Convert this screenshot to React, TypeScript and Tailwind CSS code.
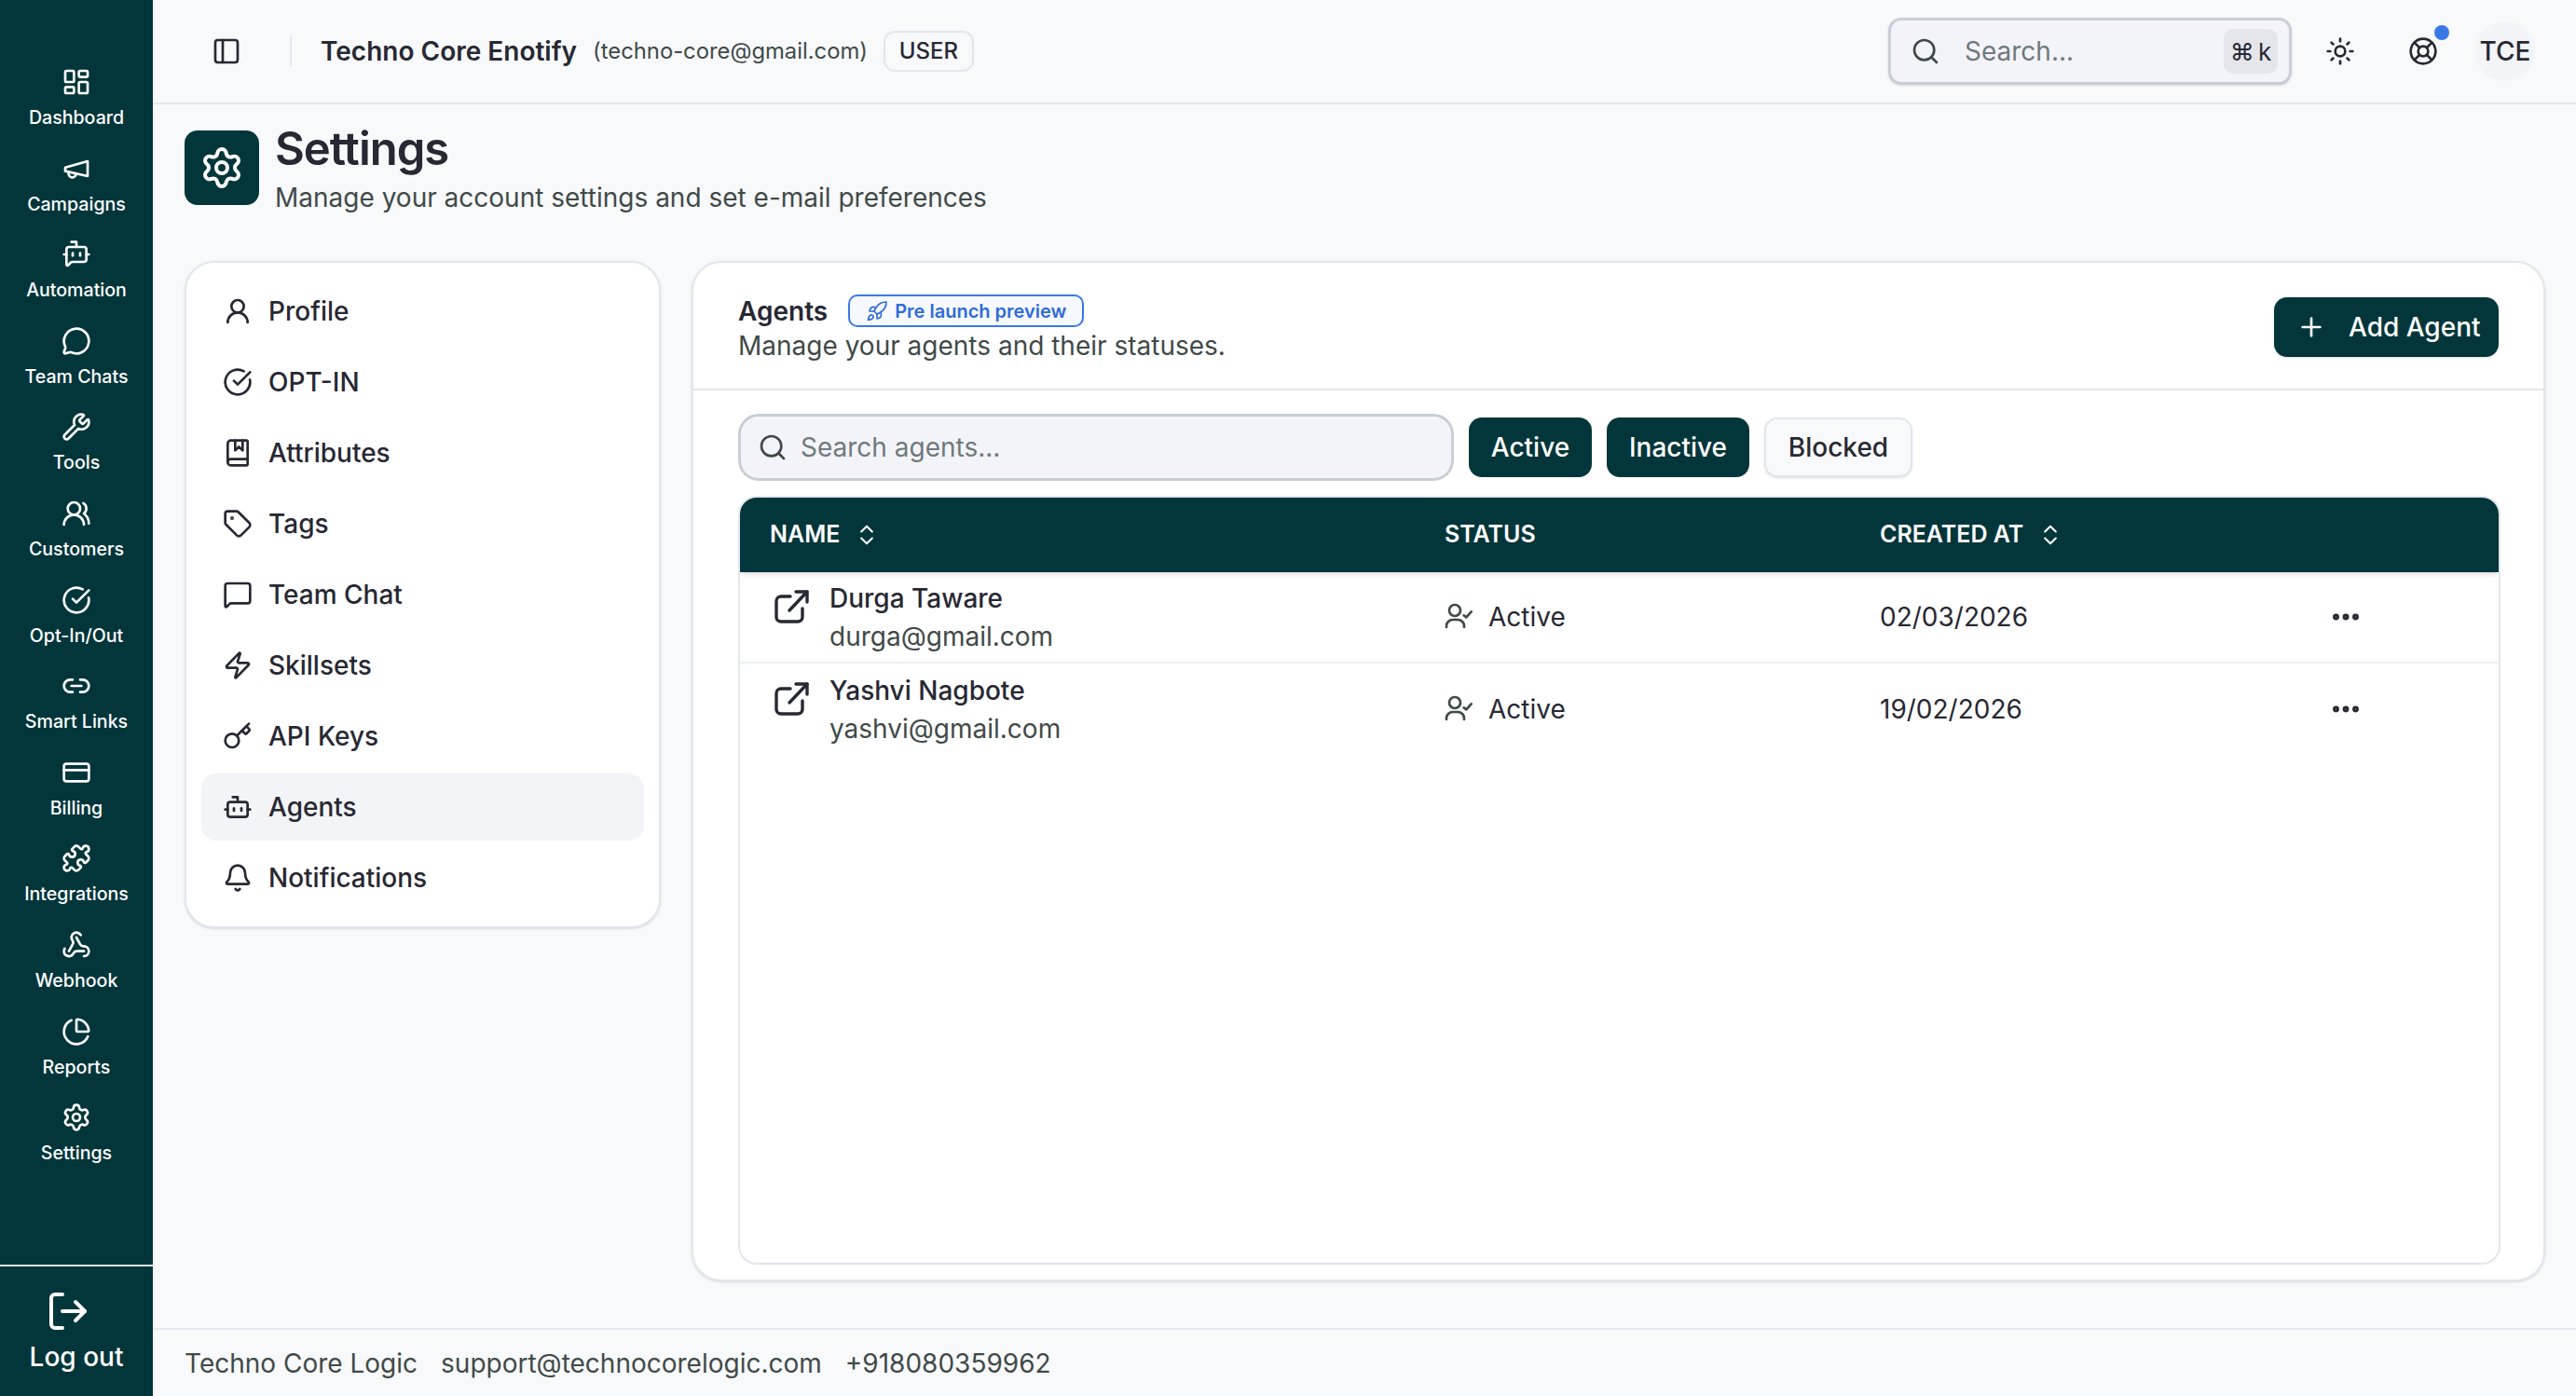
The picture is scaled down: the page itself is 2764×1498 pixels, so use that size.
import {
  BookMarked, Bell, Bot, BotMessageSquare, ChartPie, ChevronsUpDown, CircleCheckBig, CreditCard, Ellipsis,
  Key, LayoutDashboard, LifeBuoy, Link2, LogOut, MessageCircle, MessageSquare, PanelLeft, Plus, Puzzle, Rocket,
  Search, Settings, Sun, Tag, UserRound, UsersRound, Webhook, Wrench, Zap,
} from 'lucide-react';

function MegaphoneIcon({ size = 32 }: { size?: number }) {
  return (
    <svg width={size} height={size} viewBox="0 0 24 24" fill="none" stroke="currentColor" strokeWidth="2" strokeLinecap="round" strokeLinejoin="round">
      <path d="m3 11 18-5v12L3 14v-3z" />
      <path d="M11.6 16.8a3 3 0 1 1-5.8-1.6" />
    </svg>
  );
}

const navItems = [
  { label: 'Dashboard', icon: LayoutDashboard },
  { label: 'Campaigns', icon: MegaphoneIcon },
  { label: 'Automation', icon: BotMessageSquare },
  { label: 'Team Chats', icon: MessageCircle },
  { label: 'Tools', icon: Wrench },
  { label: 'Customers', icon: UsersRound },
  { label: 'Opt-In/Out', icon: CircleCheckBig },
  { label: 'Smart Links', icon: Link2 },
  { label: 'Billing', icon: CreditCard },
  { label: 'Integrations', icon: Puzzle },
  { label: 'Webhook', icon: Webhook },
  { label: 'Reports', icon: ChartPie },
  { label: 'Settings', icon: Settings },
];

const settingsItems = [
  { label: 'Profile', icon: UserRound },
  { label: 'OPT-IN', icon: CircleCheckBig },
  { label: 'Attributes', icon: BookMarked },
  { label: 'Tags', icon: Tag },
  { label: 'Team Chat', icon: MessageSquare },
  { label: 'Skillsets', icon: Zap },
  { label: 'API Keys', icon: Key },
  { label: 'Agents', icon: Bot, active: true },
  { label: 'Notifications', icon: Bell },
];

const agents = [
  { name: 'Durga Taware', email: 'durga@gmail.com', created: '02/03/2026' },
  { name: 'Yashvi Nagbote', email: 'yashvi@gmail.com', created: '19/02/2026' },
];

function Sidebar() {
  return (
    <aside className="w-[164px] shrink-0 h-full bg-[#03363a] text-white flex flex-col">
      <nav className="flex-1 flex flex-col items-center gap-[24.6px] pt-[72px]">
        {navItems.map((item) => (
          <div key={item.label} className="flex flex-col items-center gap-2">
            <item.icon size={32} />
            <span className="h-[28px] leading-[28px] text-[19.6px] font-medium whitespace-nowrap">{item.label}</span>
          </div>
        ))}
      </nav>
      <div className="h-[141px] border-t-2 border-[#dde3e8] flex flex-col items-center pt-[24px]">
        <LogOut size={48} className="mr-[18px]" />
        <span className="text-[28px] leading-[40px] font-medium mt-[5px]">Log out</span>
      </div>
    </aside>
  );
}

function Header() {
  return (
    <header className="h-[112px] shrink-0 border-b-2 border-[#e4e6ee] flex items-center pl-[63px] pr-[44px]">
      <PanelLeft size={32} className="text-[#272833]" />
      <div className="w-[2px] h-[32px] bg-[#e4e6ee] ml-[52px] mr-[31px]" />
      <span className="text-[28px] font-semibold text-[#272833]">Techno Core Enotify</span>
      <span className="text-[23.8px] text-[#3f4a48] ml-[17px]">(techno-core@gmail.com)</span>
      <span className="ml-[17px] h-[44px] w-[97px] flex items-center justify-center border-2 border-[#e4e6ee] rounded-[12px] text-[24px] font-medium text-[#272833]">USER</span>
      <div className="ml-auto w-[433px] h-[72px] bg-[#f3f4f9] border-[3px] border-[#c9ced6] rounded-[14px] shadow-sm flex items-center pl-[21px] pr-[12px]">
        <Search size={32} className="text-[#3f4a48]" />
        <span className="ml-[26px] text-[28px] text-[#6f7a7c]">Search...</span>
        <span className="ml-auto w-[58px] h-[48px] bg-[#e4e6ec] rounded-[10px] flex items-center justify-center text-[26px] text-[#272833] gap-[4px]">⌘<span>k</span></span>
      </div>
      <Sun size={32} className="ml-[36px] text-[#272833]" />
      <div className="relative ml-[57px]">
        <LifeBuoy size={32} className="text-[#272833]" />
        <span className="absolute right-[-12px] top-[-12px] w-[16px] h-[16px] rounded-full bg-[#3b78e7]" />
      </div>
      <div className="ml-[40px] w-[64px] h-[64px] rounded-full bg-[#f3f4f8] flex items-center justify-center text-[28px] font-medium text-[#272833]">TCE</div>
    </header>
  );
}

function SettingsMenu() {
  return (
    <div className="w-[511px] h-[716px] shrink-0 bg-white border-2 border-[#e4e6ee] rounded-[32px] shadow-sm px-[16px] py-[16px] flex flex-col gap-[4px]">
      {settingsItems.map((item) => (
        <div key={item.label} className={`h-[72px] shrink-0 flex items-center gap-[17px] pl-[23px] rounded-[16px] text-[#272833] ${item.active ? 'bg-[#f3f4f8]' : ''}`}>
          <item.icon size={32} />
          <span className="text-[28px] font-medium">{item.label}</span>
        </div>
      ))}
    </div>
  );
}

function StatusIcon() {
  return (
    <svg width="32" height="32" viewBox="0 0 24 24" fill="none" stroke="#3f4a48" strokeWidth="2" strokeLinecap="round" strokeLinejoin="round" className="-mt-[2px]">
      <circle cx="8.25" cy="7.5" r="4.5" />
      <path d="M1.5 21v-1a5 5 0 0 1 5-5h4.25a5 5 0 0 1 5 5v1" />
      <path d="m15.5 11.5 2 1.5 4-4.5" />
    </svg>
  );
}

function SquareLink() {
  return (
    <svg width="40" height="40" viewBox="0 0 40 40" fill="none" stroke="currentColor" strokeWidth="3.4" strokeLinecap="round" strokeLinejoin="round" className="mb-[20px]">
      <path d="M18 8H8a5 5 0 0 0-5 5v17a5 5 0 0 0 5 5h18a5 5 0 0 0 5-5v-9" />
      <path d="M17 23 36 3" />
      <path d="M24 3h12v11" />
    </svg>
  );
}

function AgentsCard() {
  return (
    <div className="flex-1 bg-white border-2 border-[#e4e6ee] rounded-[32px] shadow-sm flex flex-col">
      <div className="h-[137px] shrink-0 border-b-2 border-[#e4e6ee] flex items-center justify-between pl-[48px] pr-[48px]">
        <div className="flex flex-col">
          <div className="flex items-center gap-[22px] h-[40px] mt-[2px]">
            <span className="text-[28px] font-semibold text-[#272833]">Agents</span>
            <span className="h-[35px] flex items-center gap-[7px] px-[17px] border-2 border-[#3b78e7] rounded-[10px] bg-[#f6f9ff] text-[#2f6bd8] text-[20px] font-semibold">
              <Rocket size={24} strokeWidth={1.7} />
              Pre launch preview
            </span>
          </div>
          <span className="text-[28px] leading-[34px] text-[#3f4a48]">Manage your agents and their statuses.</span>
        </div>
        <button className="w-[241px] h-[64px] mt-[2px] bg-[#03363a] rounded-[14px] text-white flex items-center pl-[24px] gap-[24px] text-[28px] font-medium shadow-sm">
          <Plus size={32} />
          Add Agent
        </button>
      </div>
      <div className="flex-1 flex flex-col pl-[48px] pr-[46px] pt-[25px] pb-[16px]">
        <div className="flex items-center gap-[16px] h-[72px] shrink-0">
          <div className="w-[768px] h-[72px] bg-[#f3f4f9] border-[3px] border-[#c9ced6] rounded-[22px] flex items-center pl-[18px]">
            <Search size={32} className="text-[#3f4a48]" />
            <span className="ml-[14px] text-[28px] text-[#6f7a7c]">Search agents...</span>
          </div>
          <span className="w-[132px] h-[64px] bg-[#03363a] rounded-[14px] text-white text-[28px] font-medium flex items-center justify-center">Active</span>
          <span className="w-[153px] h-[64px] bg-[#03363a] rounded-[14px] text-white text-[28px] font-medium flex items-center justify-center">Inactive</span>
          <span className="w-[159px] h-[64px] bg-[#f8f9fb] border-2 border-[#e4e6ee] rounded-[14px] text-[#272833] text-[28px] font-medium flex items-center justify-center shadow-sm">Blocked</span>
        </div>
        <div className="flex-1 mt-[16px] border-2 border-[#e4e6ee] rounded-[20px] overflow-hidden">
          <div className="h-[80px] bg-[#03363a] text-white text-[25px] font-semibold grid grid-cols-[724px_467px_1fr] items-center pl-[32px] shadow-md">
            <div className="flex items-center gap-[15px]">NAME <ChevronsUpDown size={28} strokeWidth={1.8} /></div>
            <div>STATUS</div>
            <div className="flex items-center gap-[15px]">CREATED AT <ChevronsUpDown size={28} strokeWidth={1.8} /></div>
          </div>
          {agents.map((agent, i) => (
            <div key={agent.email} className={`h-[98px] grid grid-cols-[724px_467px_1fr] items-center pl-[32px] text-[#272833] ${i === 0 ? 'border-b-2 border-[#eef0f4]' : ''}`}>
              <div className="flex items-center gap-[20px] pl-[4px]">
                <SquareLink />
                <div className="flex flex-col">
                  <span className="text-[28px] leading-[40px] font-medium">{agent.name}</span>
                  <span className="text-[28px] leading-[40px] text-[#3f4a48] mt-[1px]">{agent.email}</span>
                </div>
              </div>
              <div className="flex items-center gap-[15px] text-[28px]">
                <StatusIcon />
                Active
              </div>
              <div className="flex items-center text-[28px]">
                <span>{agent.created}</span>
                <Ellipsis size={36} strokeWidth={2.6} className="ml-auto mr-[146px]" />
              </div>
            </div>
          ))}
        </div>
      </div>
    </div>
  );
}

export default function App() {
  return (
    <div className="w-[2764px] h-[1498px] flex bg-[#f8f9fb] overflow-hidden" style={{ fontFamily: 'Inter, "Liberation Sans", sans-serif' }}>
      <Sidebar />
      <div className="flex-1 flex flex-col min-w-0">
        <Header />
        <main className="flex-1 min-h-0 flex flex-col pl-[34px] pr-[33px] pt-[28px] pb-[50px]">
          <div className="flex gap-[17px] h-[80px] shrink-0">
            <div className="w-[80px] h-[80px] bg-[#03363a] rounded-[14px] text-white flex items-center justify-center">
              <Settings size={48} />
            </div>
            <div className="flex flex-col">
              <span className="text-[49px] leading-[52px] font-semibold tracking-[-1px] text-[#272833] -mt-[6px]">Settings</span>
              <span className="text-[28px] leading-[40px] text-[#3f4a48] mt-[6px]">Manage your account settings and set e-mail preferences</span>
            </div>
          </div>
          <div className="flex-1 min-h-0 flex items-stretch gap-[33px] mt-[60px]">
            <SettingsMenu />
            <AgentsCard />
          </div>
        </main>
        <footer className="h-[73px] shrink-0 border-t-2 border-[#e4e6ee] flex items-center gap-[25px] pl-[34px] text-[28px] text-[#3f4a48]">
          <span>Techno Core Logic</span>
          <span>support@technocorelogic.com</span>
          <span>+918080359962</span>
        </footer>
      </div>
    </div>
  );
}
